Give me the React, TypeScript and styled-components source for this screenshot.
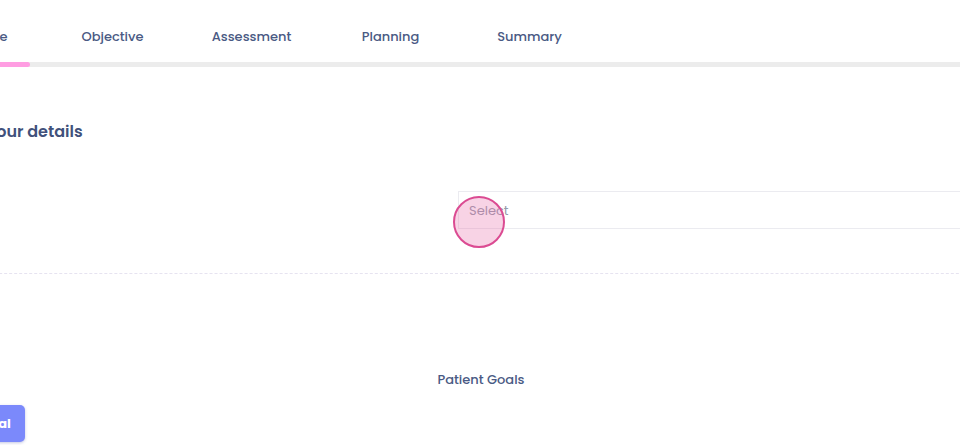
import styled, { createGlobalStyle } from 'styled-components';

const GlobalStyle = createGlobalStyle`
    html, body {
        margin: 0;
        padding: 0;
        background: #ffffff;
        overflow: hidden;
    }
    body {
        font-family: 'Poppins', Inter, 'Noto Sans', sans-serif;
        color: #4a5a84;
    }
`;

const TABS = ['Subjective', 'Objective', 'Assessment', 'Planning', 'Summary'];
const ACTIVE_PROGRESS = 126;

export const Styles = {
    Page: styled.main`
        width: 1150px;
        height: 445px;
        margin-left: -96px;
        display: flex;
        flex-direction: column;
    `,
    TabBar: styled.nav`
        display: flex;
        height: 62px;
        align-items: center;
        padding-top: 11px;
        box-sizing: border-box;
    `,
    Tab: styled.div`
        width: 139px;
        text-align: center;
        font-size: 13px;
        font-weight: 500;
        color: #4a5a84;
        line-height: 24px;
    `,
    Track: styled.div`
        height: 5px;
        background: #ececec;
    `,
    Fill: styled.div`
        height: 100%;
        background: #ff9de2;
        border-radius: 0 3px 3px 0;
    `,
    Section: styled.section`
        padding: 0 0 0 82px;
        height: 207px;
        box-sizing: border-box;
        border-bottom: 1px dashed #e6e3f0;
        display: flex;
        flex-direction: column;
    `,
    Heading: styled.h2`
        margin: 53px 0 0;
        font-size: 16px;
        font-weight: 600;
        line-height: 24px;
        color: #41517b;
    `,
    FieldRow: styled.div`
        margin-top: 47px;
        padding-left: 472px;
        display: flex;
    `,
    Select: styled.div`
        position: relative;
        flex: 1;
        height: 38px;
        border: 1px solid #ebebf0;
        border-right: none;
        box-sizing: border-box;
        display: flex;
        align-items: center;
        padding: 2px 0 0 10px;
        font-size: 13px;
        color: #959aaa;
    `,
    Touch: styled.span`
        position: absolute;
        left: -6px;
        top: 4px;
        width: 52px;
        height: 52px;
        border-radius: 50%;
        border: 2px solid #db4b92;
        background: rgba(232, 110, 170, 0.3);
        box-sizing: border-box;
    `,
    Goals: styled.section`
        display: flex;
        flex-direction: column;
    `,
    GoalsTitle: styled.div`
        width: 1154px;
        text-align: center;
        margin-top: 96px;
        font-size: 13px;
        font-weight: 500;
        line-height: 20px;
        color: #4a5a84;
    `,
    Button: styled.button`
        margin-top: 15px;
        margin-left: 24px;
        width: 97px;
        height: 37px;
        border: none;
        border-radius: 5px;
        background: #7b89fb;
        color: #ffffff;
        font-family: inherit;
        font-size: 13px;
        font-weight: 700;
        box-shadow: 0 1px 3px rgba(60, 70, 160, 0.3);
        text-align: left;
        padding-left: 22px;
    `,
};

export default function App() {
    return (
        <>
            <GlobalStyle />
            <Styles.Page>
                <Styles.TabBar>
                    {TABS.map((tab) => (
                        <Styles.Tab key={tab}>{tab}</Styles.Tab>
                    ))}
                </Styles.TabBar>
                <Styles.Track>
                    <Styles.Fill style={{ width: ACTIVE_PROGRESS }} />
                </Styles.Track>
                <Styles.Section>
                    <Styles.Heading>Your details</Styles.Heading>
                    <Styles.FieldRow>
                        <Styles.Select>
                            Select
                            <Styles.Touch />
                        </Styles.Select>
                    </Styles.FieldRow>
                </Styles.Section>
                <Styles.Goals>
                    <Styles.GoalsTitle>Patient Goals</Styles.GoalsTitle>
                    <Styles.Button>Add Goal</Styles.Button>
                </Styles.Goals>
            </Styles.Page>
        </>
    );
}
